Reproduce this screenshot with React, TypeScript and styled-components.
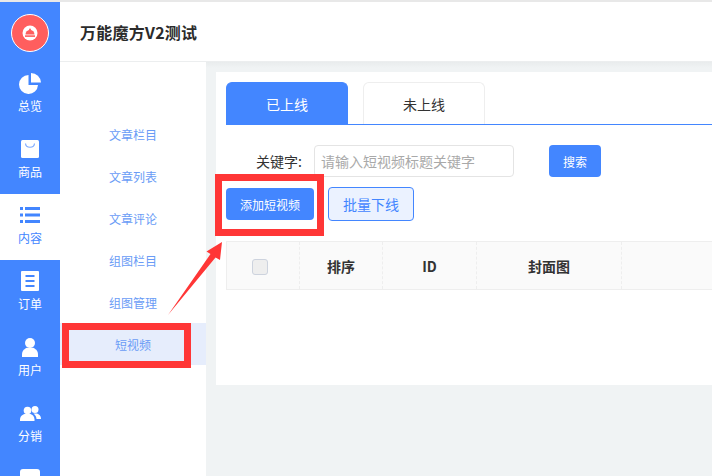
import styled, { createGlobalStyle } from 'styled-components';

const GlobalStyle = createGlobalStyle`
  html, body, #root {
    margin: 0;
    padding: 0;
    height: 100%;
    overflow: hidden;
  }
  body {
    font-family: "Noto Sans CJK SC", "Liberation Sans", sans-serif;
  }
  * {
    box-sizing: border-box;
  }
`;

const Page = styled.div`
  position: relative;
  display: flex;
  height: 100vh;
  border-top: 2px solid #e8e8e8;
  background: #fff;
  overflow: hidden;
`;

const Sidebar = styled.nav`
  flex: 0 0 60px;
  background: #4386ff;
  overflow: hidden;
`;

const LogoSlot = styled.div`
  height: 60px;
  padding-top: 12px;
  display: flex;
  justify-content: center;
`;

const SideItem = styled.div<{ $active?: boolean }>`
  height: 66px;
  padding-top: 9px;
  display: flex;
  flex-direction: column;
  align-items: center;
  flex-shrink: 0;
  background: ${(p) => (p.$active ? '#fff' : 'transparent')};
  color: ${(p) => (p.$active ? '#4386ff' : '#fff')};
`;

const SideIcon = styled.div`
  height: 24px;
  display: flex;
  align-items: center;
  justify-content: center;
`;

const SideLabel = styled.span`
  font-size: 12px;
  line-height: 22px;
`;

const Main = styled.div`
  flex: 1;
  min-width: 0;
  display: flex;
  flex-direction: column;
`;

const Header = styled.header`
  flex: 0 0 60px;
  display: flex;
  align-items: center;
  padding-left: 20px;
  border-bottom: 1px solid #eceeef;
  font-size: 16px;
  font-weight: 700;
  letter-spacing: 0.25px;
  color: #2b2b2b;
`;

const Body = styled.div`
  flex: 1;
  display: flex;
  min-height: 0;
`;

const SubNav = styled.div`
  flex: 0 0 146px;
  padding-top: 51px;
`;

const SubItem = styled.div<{ $active?: boolean }>`
  height: 42px;
  display: flex;
  align-items: center;
  justify-content: center;
  font-size: 12px;
  color: #6a9cf6;
  background: ${(p) => (p.$active ? '#e6edfc' : 'transparent')};
`;

const Content = styled.main`
  flex: 1;
  min-width: 0;
  padding: 10px 0 0 10px;
  background: linear-gradient(#e9eced, #f0f3f4 6px);
`;

const Panel = styled.section`
  height: 313px;
  padding: 10px 0 0 10px;
  background: #fff;
`;

const Tabs = styled.div`
  display: flex;
  gap: 15px;
  height: 43px;
  border-bottom: 1px solid #4386ff;
`;

const Tab = styled.div<{ $active?: boolean }>`
  width: 122px;
  height: 42px;
  display: flex;
  align-items: center;
  justify-content: center;
  font-size: 14px;
  border-radius: 6px 6px 0 0;
  color: ${(p) => (p.$active ? '#fff' : '#333')};
  background: ${(p) => (p.$active ? '#4386ff' : '#fff')};
  border: 1px solid ${(p) => (p.$active ? '#4386ff' : '#eeeeee')};
  border-bottom: 0;
`;

const FilterRow = styled.div`
  display: flex;
  align-items: center;
  margin-top: 20px;
  padding-left: 30px;
`;

const FilterLabel = styled.label`
  width: 58px;
  font-size: 14px;
  color: #333;
`;

const SearchInput = styled.input`
  width: 200px;
  height: 32px;
  padding: 0 6px;
  border: 1px solid #e4e4e4;
  border-radius: 4px;
  outline: none;
  font: inherit;
  font-size: 14px;
  &::placeholder {
    color: #a9a9a9;
  }
`;

const SearchButton = styled.button`
  width: 52px;
  height: 32px;
  margin-left: 35px;
  padding: 0;
  border: 0;
  border-radius: 4px;
  background: #4386ff;
  color: #fff;
  font: inherit;
  font-size: 12px;
`;

const Toolbar = styled.div`
  display: flex;
  align-items: center;
  gap: 14px;
  margin-top: 10px;
`;

const AddButton = styled.button`
  width: 88px;
  height: 32px;
  padding: 0;
  border: 0;
  border-radius: 4px;
  background: #4386ff;
  color: #fff;
  font: inherit;
  font-size: 12px;
`;

const BatchButton = styled.button`
  width: 86px;
  height: 34px;
  padding: 0;
  border: 1px solid #4386ff;
  border-radius: 4px;
  background: #ebf2ff;
  color: #4386ff;
  font: inherit;
  font-size: 14px;
`;

const TableHead = styled.div`
  display: flex;
  height: 49px;
  margin-top: 20px;
  border: 1px solid #eeeeee;
  border-right: 0;
  background: #fafafa;
`;

const HeadCell = styled.div<{ $width: number }>`
  flex: 0 0 ${(p) => p.$width}px;
  display: flex;
  align-items: center;
  justify-content: center;
  border-right: 1px dashed #eeeeee;
  font-size: 14px;
  font-weight: 700;
  color: #333;
`;

const Checkbox = styled.span`
  width: 16px;
  height: 16px;
  margin: 2px 6px 0 0;
  border: 1px solid #cdd3de;
  border-radius: 3px;
  background: #eeeeee;
`;

// red marks drawn over the screenshot
const RedBox = styled.div<{ $x: number; $y: number; $w: number; $h: number }>`
  position: absolute;
  left: ${(p) => p.$x}px;
  top: ${(p) => p.$y}px;
  width: ${(p) => p.$w}px;
  height: ${(p) => p.$h}px;
  border: 7px solid #ff3636;
`;

const ArrowSvg = styled.svg`
  position: absolute;
  left: 160px;
  top: 232px;
`;

const Logo = () => (
  <svg width="38" height="38" viewBox="0 0 38 38">
    <circle cx="19" cy="19" r="18.5" fill="#ff5e5e" stroke="#fff" />
    <circle cx="19" cy="19" r="7.5" fill="#fff" />
    <path d="M14.5 20.5a4.5 4.5 0 0 1 9 0z" fill="#ff5e5e" />
    <circle cx="19" cy="15.5" r="1" fill="#ff5e5e" />
    <rect x="14" y="21.3" width="10" height="1.6" fill="#ff5e5e" />
  </svg>
);

const PieIcon = () => (
  <svg width="22" height="21" viewBox="0 0 22 21" fill="#fff">
    <path d="M9.5 2a9.5 9.5 0 1 0 9.5 10H9.5z" />
    <path d="M12 0v9.500h10A10 10 0 0 0 12 0z" />
  </svg>
);

const BagIcon = () => (
  <svg width="18" height="18" viewBox="0 0 18 18">
    <rect width="18" height="18" rx="1.500" fill="#fff" />
    <path d="M4.500 3.500c.5 5 8.500 5 9 0" fill="none" stroke="#7fabff" strokeWidth="1.200" />
  </svg>
);

const ListIcon = () => (
  <svg width="20" height="16" viewBox="0 0 20 16" fill="#4386ff">
    <rect width="3" height="3" />
    <rect x="5" width="15" height="3" />
    <rect y="6.500" width="3" height="3" />
    <rect x="5" y="6.500" width="15" height="3" />
    <rect y="13" width="3" height="3" />
    <rect x="5" y="13" width="15" height="3" />
  </svg>
);

const OrderIcon = () => (
  <svg width="18" height="20" viewBox="0 0 18 20">
    <rect width="18" height="20" rx="1" fill="#fff" />
    <path d="M4.500 5h9M4.500 10h9M4.500 15h9" stroke="#4386ff" strokeWidth="2" />
  </svg>
);

const UserIcon = () => (
  <svg width="16" height="19" viewBox="0 0 16 19" fill="#fff">
    <circle cx="8" cy="5" r="5" />
    <path d="M0 19v-2.500C0 12.500 3 10.500 5 9.800h6c2 .7 5 2.700 5 6.700V19z" />
  </svg>
);

const UsersIcon = () => (
  <svg width="21" height="15" viewBox="0 0 21 15" fill="#fff">
    <circle cx="7.500" cy="4.500" r="3.800" />
    <path d="M0 15v-1.500C0 10.500 2.500 8.500 4.500 8h6c2 .5 4 2.500 4 5.500V15z" />
    <circle cx="15" cy="3.500" r="3.500" />
    <path d="M13.500 7.500h3.500c2 .5 4 2.500 4 5v.5h-4.500c0-2-1.200-4-3-5.500z" />
  </svg>
);

// only the top of this one is inside the window
const LastIcon = () => (
  <svg width="20" height="20" viewBox="0 0 20 20" fill="#fff">
    <path d="M0 3a3 3 0 0 1 3-3h14a3 3 0 0 1 3 3v17H0z" />
  </svg>
);

const sideItems = [
  { key: 'overview', label: '总览', icon: <PieIcon /> },
  { key: 'goods', label: '商品', icon: <BagIcon /> },
  { key: 'content', label: '内容', icon: <ListIcon />, active: true },
  { key: 'orders', label: '订单', icon: <OrderIcon /> },
  { key: 'users', label: '用户', icon: <UserIcon /> },
  { key: 'share', label: '分销', icon: <UsersIcon /> },
  { key: 'more', icon: <LastIcon /> },
];

const subItems = ['文章栏目', '文章列表', '文章评论', '组图栏目', '组图管理', '短视频'];

const App = () => {
  return (
    <>
      <GlobalStyle />
      <Page>
        <Sidebar>
          <LogoSlot>
            <Logo />
          </LogoSlot>
          {sideItems.map((item) => (
            <SideItem key={item.key} $active={item.active}>
              <SideIcon>{item.icon}</SideIcon>
              {item.label && <SideLabel>{item.label}</SideLabel>}
            </SideItem>
          ))}
        </Sidebar>
        <Main>
          <Header>万能魔方V2测试</Header>
          <Body>
            <SubNav>
              {subItems.map((name) => (
                <SubItem key={name} $active={name === '短视频'}>
                  {name}
                </SubItem>
              ))}
            </SubNav>
            <Content>
              <Panel>
                <Tabs>
                  <Tab $active>已上线</Tab>
                  <Tab>未上线</Tab>
                </Tabs>
                <FilterRow>
                  <FilterLabel>关键字:</FilterLabel>
                  <SearchInput placeholder="请输入短视频标题关键字" />
                  <SearchButton>搜索</SearchButton>
                </FilterRow>
                <Toolbar>
                  <AddButton>添加短视频</AddButton>
                  <BatchButton>批量下线</BatchButton>
                </Toolbar>
                <TableHead>
                  <HeadCell $width={73}>
                    <Checkbox />
                  </HeadCell>
                  <HeadCell $width={83}>排序</HeadCell>
                  <HeadCell $width={94}>ID</HeadCell>
                  <HeadCell $width={145}>封面图</HeadCell>
                </TableHead>
              </Panel>
            </Content>
          </Body>
        </Main>
        <RedBox $x={215} $y={172} $w={109} $h={62} />
        <RedBox $x={62} $y={321} $w={129} $h={45} />
        <ArrowSvg width="70" height="90" viewBox="0 0 70 90">
          <path d="M8 81 50.500 20 46.500 17.500 62 8 60 26 55.500 23.500z" fill="#ff3636" />
        </ArrowSvg>
      </Page>
    </>
  );
};

export default App;
